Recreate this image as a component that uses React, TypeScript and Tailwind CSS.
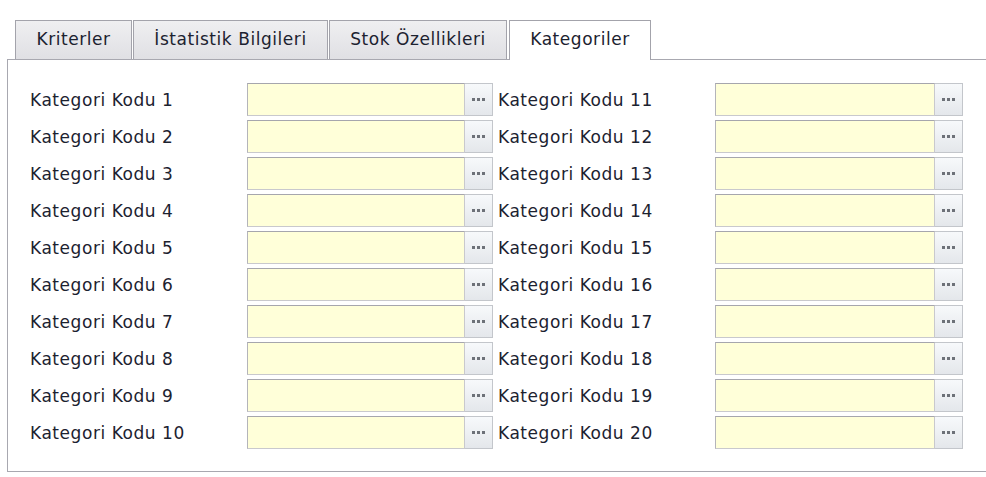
import React from "react";

const font = { fontFamily: '"DejaVu Sans", Verdana, sans-serif', letterSpacing: "0.55px" };

function Field({ label, inputW }: { label: string; inputW: string }) {
  return (
    <div className="flex items-center h-[37px]">
      <div className="w-[217px] text-[17px] text-[#1c2230] leading-none pt-[1px]">{label}</div>
      <div className={`${inputW} h-[33px] bg-[#ffffd9] border border-[#c9c9cd] border-t-[#a6a6ad] border-l-[#b4b4ba]`} />
      <div className="w-[28px] h-[33px] border border-[#c3c6cb] border-l-0 bg-gradient-to-b from-[#f7f9fb] to-[#e4e7eb] flex items-center justify-center gap-[2px] pb-[1px]">
        <span className="w-[3px] h-[3px] bg-[#6d7178]" />
        <span className="w-[3px] h-[3px] bg-[#6d7178]" />
        <span className="w-[3px] h-[3px] bg-[#6d7178]" />
      </div>
    </div>
  );
}

export default function App() {
  const tabs = [
    { t: "Kriterler", w: "w-[117px]" },
    { t: "İstatistik Bilgileri", w: "w-[195px]" },
    { t: "Stok Özellikleri", w: "w-[178px]" },
  ];
  const left = Array.from({ length: 10 }, (_, i) => `Kategori Kodu ${i + 1}`);
  const right = Array.from({ length: 10 }, (_, i) => `Kategori Kodu ${i + 11}`);
  return (
    <div className="w-[986px] h-[477px] bg-white overflow-hidden pt-[20px] pl-[7px]" style={font}>
      <div className="flex items-end gap-[1px] ml-[8px] h-[39px] relative z-10">
        {tabs.map((x) => (
          <div
            key={x.t}
            className={`${x.w} h-[39px] border border-b-0 border-[#a3a3ab] bg-gradient-to-b from-[#efeff1] to-[#e0e0e4] flex items-center justify-center text-[17px] text-[#1c2230]`}
          >
            {x.t}
          </div>
        ))}
        <div className="w-[142px] ml-[1px] h-[40px] mb-[-1px] border border-b-0 border-[#a3a3ab] bg-white flex items-center justify-center text-[17px] text-[#1c2230] pb-[1px]">
          Kategoriler
        </div>
      </div>
      <div className="w-[1000px] h-[413px] border border-[#a8a8b0] bg-white pt-[21px] pl-[22px]">
        <div className="flex">
          <div className="flex flex-col">
            {left.map((l) => (
              <Field key={l} label={l} inputW="w-[218px]" />
            ))}
          </div>
          <div className="flex flex-col ml-[5px]">
            {right.map((l) => (
              <Field key={l} label={l} inputW="w-[220px]" />
            ))}
          </div>
        </div>
      </div>
    </div>
  );
}
